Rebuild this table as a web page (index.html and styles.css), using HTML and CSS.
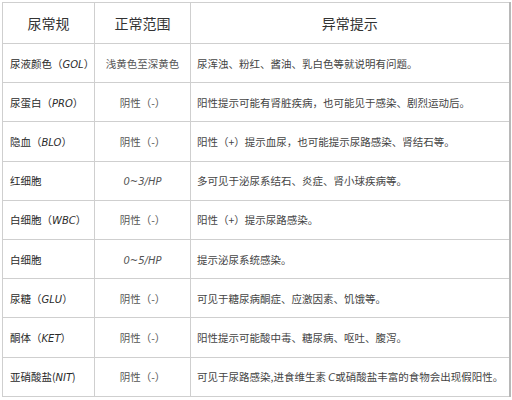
FILE: index.html
```html
<!DOCTYPE html>
<html lang="zh">
<head>
<meta charset="utf-8">
<link rel="stylesheet" href="styles.css">
</head>
<body>
<table class="grid">
  <colgroup>
    <col class="c1"><col class="c2"><col class="c3">
  </colgroup>
  <thead>
    <tr class="head"><th>尿常规</th><th>正常范围</th><th>异常提示</th></tr>
  </thead>
  <tbody>
    <tr><td class="name">尿液颜色（<i>GOL</i>）</td><td class="range">浅黄色至深黄色</td><td class="note">尿浑浊、粉红、酱油、乳白色等就说明有问题。</td></tr>
    <tr><td class="name">尿蛋白（<i>PRO</i>）</td><td class="range">阴性（-）</td><td class="note">阳性提示可能有肾脏疾病，也可能见于感染、剧烈运动后。</td></tr>
    <tr><td class="name">隐血（<i>BLO</i>）</td><td class="range">阴性（-）</td><td class="note">阳性（+）提示血尿，也可能提示尿路感染、肾结石等。</td></tr>
    <tr><td class="name">红细胞</td><td class="range"><i>0~3/HP</i></td><td class="note">多可见于泌尿系结石、炎症、肾小球疾病等。</td></tr>
    <tr><td class="name">白细胞（<i>WBC</i>）</td><td class="range">阴性（-）</td><td class="note">阳性（+）提示尿路感染。</td></tr>
    <tr><td class="name">白细胞</td><td class="range"><i>0~5/HP</i></td><td class="note">提示泌尿系统感染。</td></tr>
    <tr><td class="name">尿糖（<i>GLU</i>）</td><td class="range">阴性（-）</td><td class="note">可见于糖尿病酮症、应激因素、饥饿等。</td></tr>
    <tr><td class="name">酮体（<i>KET</i>）</td><td class="range">阴性（-）</td><td class="note">阳性提示可能酸中毒、糖尿病、呕吐、腹泻。</td></tr>
    <tr><td class="name">亚硝酸盐(<i>NIT</i>)</td><td class="range">阴性（-）</td><td class="note">可见于尿路感染,进食维生素 <i>C</i>或硝酸盐丰富的食物会出现假阳性。</td></tr>
  </tbody>
</table>
</body>
</html>
```

FILE: styles.css
```css
html, body {
  margin: 0;
  padding: 0;
  background: #ffffff;
}
body {
  padding: 2px 0 0 2px;
  font-family: "Noto Sans CJK SC", "Noto Sans", sans-serif;
  color: #3a3a3a;
}
.grid {
  border-collapse: collapse;
  table-layout: fixed;
  width: 507px;
  border: 1px solid #c2c2c2;
  border-right: 2px solid #b8b8b8;
}
.c1 { width: 92px; }
.c2 { width: 96px; }
.c3 { width: 319px; }
.grid th, .grid td {
  border: 1px solid #cfcfcf;
  padding: 0;
  white-space: nowrap;
  overflow: visible;
}
.head th {
  height: 40px;
  font-size: 14px;
  font-weight: normal;
  color: #333;
  text-align: center;
}
.grid tbody td {
  height: 38.2px;
  font-size: 10.5px;
}
.grid td.name {
  padding-left: 7px;
  color: #2a2a2a;
}
.grid td.range {
  text-align: center;
  color: #555;
}
.grid td.note {
  padding-left: 6px;
  color: #444;
}
i {
  font-family: "DejaVu Sans", sans-serif;
  font-style: italic;
  font-size: 10px;
}
```
